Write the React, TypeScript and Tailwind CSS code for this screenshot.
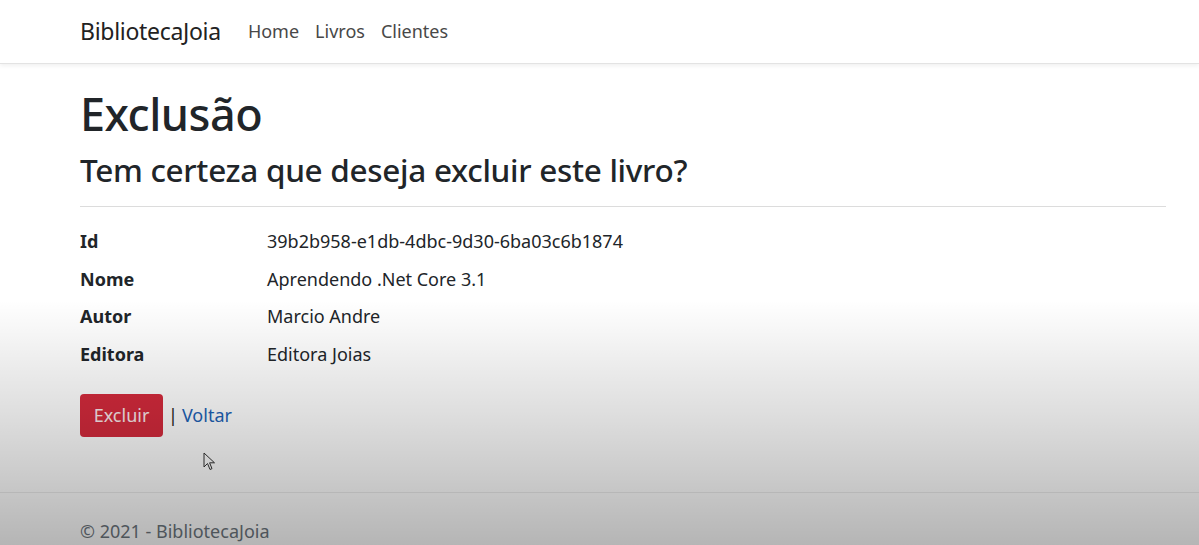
import React from 'react';

const font = { fontFamily: '"Noto Sans", "Open Sans", Arial, sans-serif' };

const campos = [
  { label: 'Id', valor: '39b2b958-e1db-4dbc-9d30-6ba03c6b1874' },
  { label: 'Nome', valor: 'Aprendendo .Net Core 3.1' },
  { label: 'Autor', valor: 'Marcio Andre' },
  { label: 'Editora', valor: 'Editora Joias' },
];

export default function App() {
  return (
    <div className="relative w-[1199px] h-[545px] overflow-hidden bg-white text-[#212529]" style={font}>
      {/* navbar */}
      <header className="h-[64px] border-b border-[#e3e3e3] shadow-[0_2px_4px_rgba(0,0,0,0.06)] bg-white flex items-center pl-[80px]">
        <span className="text-[23px] text-[#222] mr-[27px] tracking-[-0.3px]">BibliotecaJoia</span>
        <nav className="flex gap-[16px] text-[18px] text-[#484848]">
          <a>Home</a>
          <a>Livros</a>
          <a>Clientes</a>
        </nav>
      </header>

      {/* conteúdo */}
      <main className="ml-[80px] w-[1086px] pt-[22px]">
        <h1 className="text-[45px] font-medium leading-[56px] tracking-[-0.5px]">Exclusão</h1>
        <h3 className="text-[31.5px] font-medium leading-[40px] mt-[8px] tracking-[-0.3px]">Tem certeza que deseja excluir este livro?</h3>
        <hr className="mt-[16px] border-t border-[#dcdcdc]" />
        <dl className="mt-[16px] text-[18px]">
          {campos.map((c) => (
            <div key={c.label} className="flex h-[37.5px] items-center">
              <dt className="w-[187px] font-bold">{c.label}</dt>
              <dd>{c.valor}</dd>
            </div>
          ))}
        </dl>
        <div className="mt-[21px] flex items-center text-[18px]">
          <button className="h-[43px] w-[83px] rounded-[4px] bg-[#d42a3c] text-[#fbe9eb] text-[18px]">Excluir</button>
          <span className="ml-[5px] mr-[4px] text-[#222]">|</span>
          <a className="text-[#1d63b6]">Voltar</a>
        </div>
      </main>

      {/* cursor */}
      <svg className="absolute left-[203px] top-[452px]" width="14" height="20" viewBox="0 0 14 20">
        <path d="M1 1 L1 15 L4.5 11.5 L7 17.5 L9 16.6 L6.6 10.8 L11.5 10.8 Z" fill="#fff" stroke="#333" strokeWidth="1" strokeLinejoin="round" />
      </svg>

      {/* rodapé */}
      <footer className="absolute left-0 right-0 top-[492px] h-[60px] border-t border-[#ececec] pl-[80px] pt-[25px] text-[18px] text-[#6c757d]">
        © 2021 - BibliotecaJoia
      </footer>

      {/* escurecimento do vídeo */}
      <div className="pointer-events-none absolute left-0 right-0 top-[300px] bottom-0 bg-gradient-to-b from-black/0 via-black/[0.14] to-black/[0.29]" />
    </div>
  );
}
